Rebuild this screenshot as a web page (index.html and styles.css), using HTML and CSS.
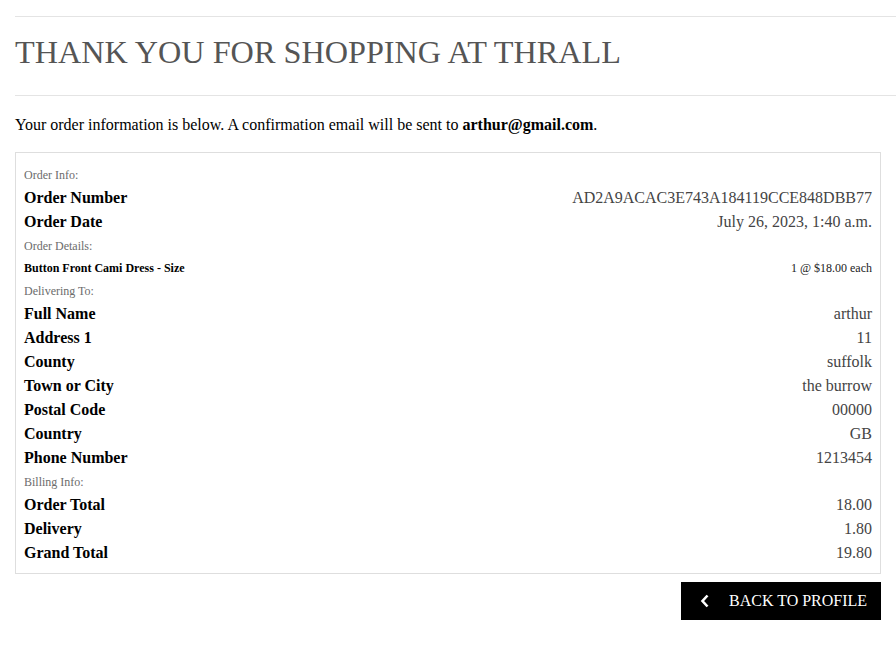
FILE: index.html
```html
<!DOCTYPE html>
<html lang="en">
<head>
<meta charset="utf-8">
<title>Checkout Success</title>
<link rel="stylesheet" href="styles.css">
</head>
<body>
<main class="page">
  <hr class="rule rule-top">
  <h1 class="title">THANK YOU FOR SHOPPING AT THRALL</h1>
  <hr class="rule rule-bottom">
  <p class="intro">Your order information is below. A confirmation email will be sent to <strong>arthur@gmail.com</strong>.</p>

  <section class="order-box">
    <div class="label">Order Info:</div>
    <div class="row"><span class="key">Order Number</span><span class="val">AD2A9ACAC3E743A184119CCE848DBB77</span></div>
    <div class="row"><span class="key">Order Date</span><span class="val">July 26, 2023, 1:40 a.m.</span></div>

    <div class="label">Order Details:</div>
    <div class="row row-small"><span class="key">Button Front Cami Dress - Size</span><span class="val">1 @ $18.00 each</span></div>

    <div class="label">Delivering To:</div>
    <div class="row"><span class="key">Full Name</span><span class="val">arthur</span></div>
    <div class="row"><span class="key">Address 1</span><span class="val">11</span></div>
    <div class="row"><span class="key">County</span><span class="val">suffolk</span></div>
    <div class="row"><span class="key">Town or City</span><span class="val">the burrow</span></div>
    <div class="row"><span class="key">Postal Code</span><span class="val">00000</span></div>
    <div class="row"><span class="key">Country</span><span class="val">GB</span></div>
    <div class="row"><span class="key">Phone Number</span><span class="val">1213454</span></div>

    <div class="label">Billing Info:</div>
    <div class="row"><span class="key">Order Total</span><span class="val">18.00</span></div>
    <div class="row"><span class="key">Delivery</span><span class="val">1.80</span></div>
    <div class="row"><span class="key">Grand Total</span><span class="val">19.80</span></div>
  </section>

  <div class="actions">
    <a class="btn-back" href="#">
      <svg class="chev" width="10" height="14" viewBox="0 0 10 14" aria-hidden="true"><path d="M7.5 1.5 L2.5 7 L7.5 12.5" fill="none" stroke="#fff" stroke-width="2.6" stroke-linecap="butt" stroke-linejoin="miter"/></svg>
      <span>BACK TO PROFILE</span>
    </a>
  </div>
</main>
</body>
</html>
```

FILE: styles.css
```css
html, body {
  margin: 0;
  padding: 0;
  background: #fff;
}
body {
  font-family: "Liberation Serif", "Times New Roman", serif;
  color: #000;
  font-size: 16px;
  overflow-x: hidden;
}
.page {
  padding: 16px 15px 0 15px;
}
.rule {
  border: 0;
  border-top: 1px solid #e4e4e4;
  margin: 0 -15px 0 0;
  height: 0;
}
.title {
  font-weight: normal;
  font-size: 32.25px;
  line-height: 38px;
  color: #555;
  margin: 0;
  padding: 16px 0 24px 0;
}
.intro {
  margin: 0;
  padding: 19px 0 0 0;
  line-height: 20px;
  height: 37px;
}
.order-box {
  border: 1px solid #dedede;
  padding: 10px 8px 8px 8px;
  display: flex;
  flex-direction: column;
}
.label {
  font-size: 12px;
  color: #6c6c6c;
  box-sizing: border-box;
  padding-top: 2px;
  line-height: 21px;
  height: 23px;
}
.row {
  display: flex;
  justify-content: space-between;
  align-items: center;
  height: 24px;
}
.key {
  font-weight: bold;
  font-size: 16px;
}
.val {
  color: #444;
  font-size: 16px;
}
.row-small {
  height: 22px;
}
.row-small .key,
.row-small .val {
  font-size: 12px;
}
.row-small .val {
  color: #222;
}
.actions {
  display: flex;
  justify-content: flex-end;
  padding-top: 8px;
}
.btn-back {
  display: flex;
  align-items: center;
  background: #000;
  color: #fff;
  text-decoration: none;
  width: 200px;
  height: 38px;
  box-sizing: border-box;
  padding-left: 19px;
  font-size: 16px;
}
.chev {
  margin-right: 19px;
}
```
